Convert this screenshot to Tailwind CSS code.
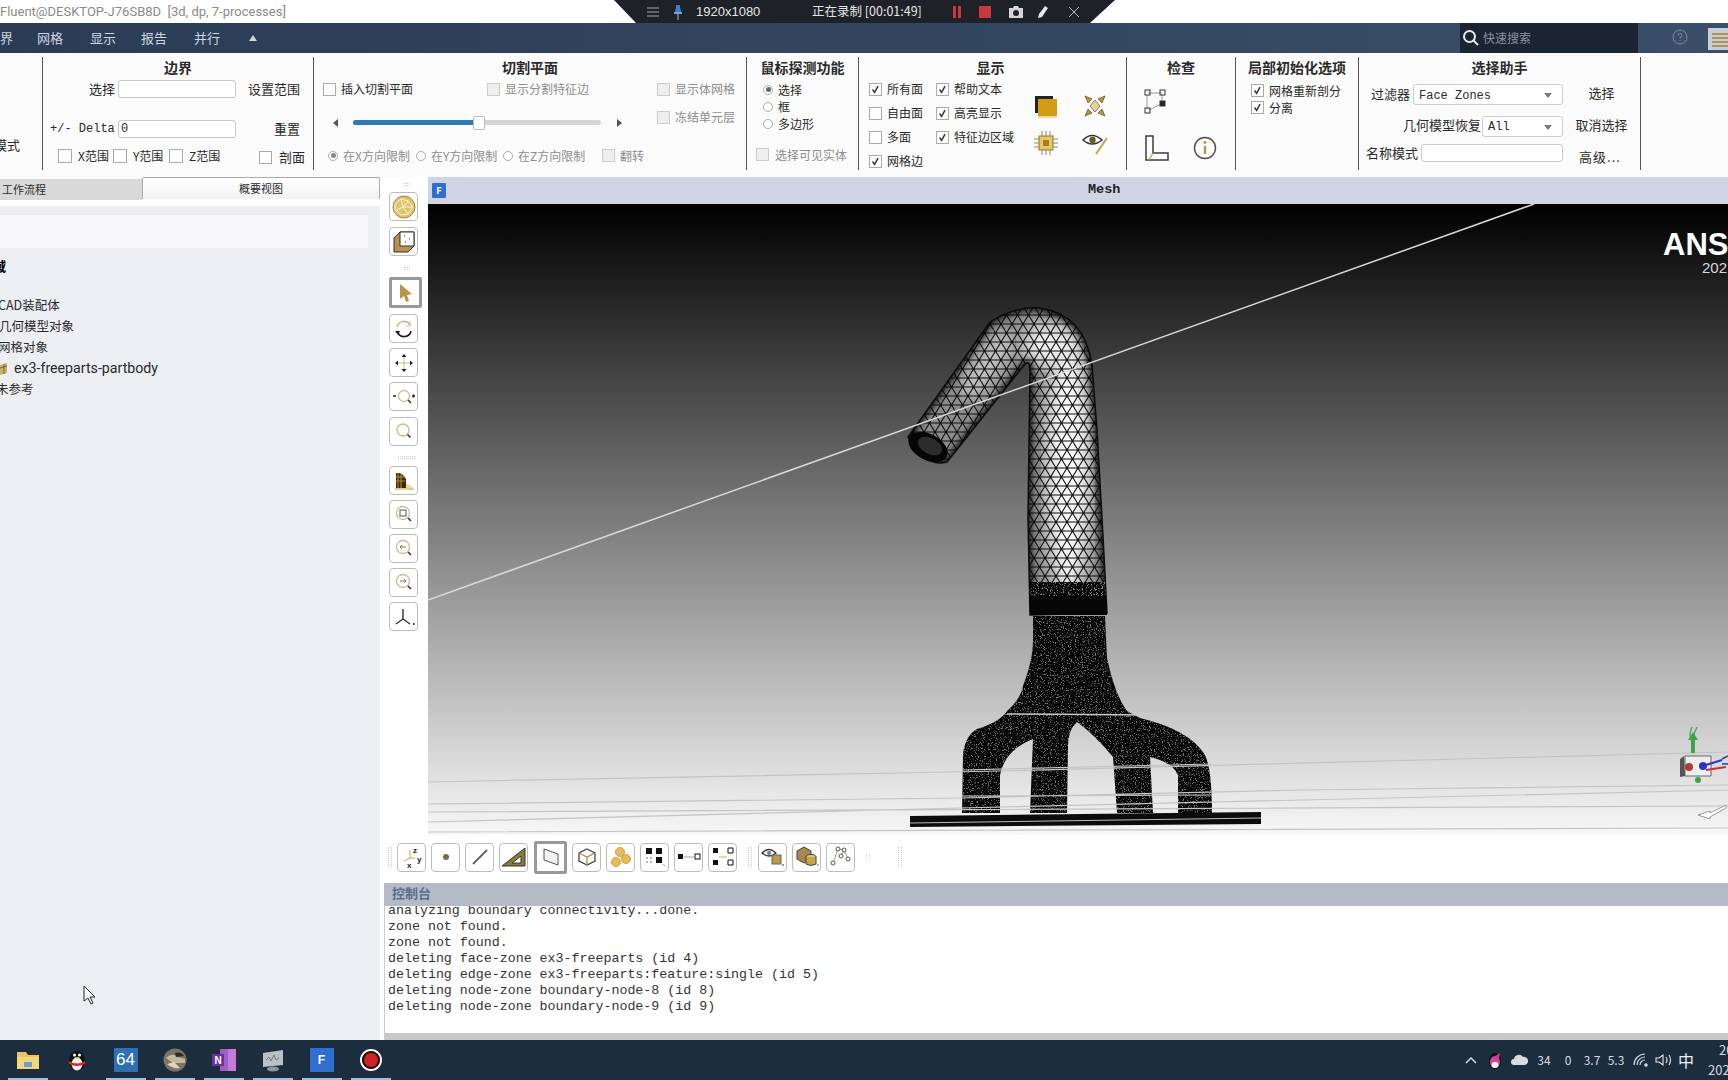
<!DOCTYPE html>
<html lang="zh-CN">
<head>
<meta charset="UTF-8" />
<title>Fluent</title>
<script src="https://cdn.jsdelivr.net/npm/@tailwindcss/browser@4"></script>
</head>
<body class="w-[1728px] h-[1080px] overflow-hidden bg-white text-[13px] text-[#2a2a2a] font-['Noto_Sans_CJK_SC','Liberation_Sans',sans-serif] relative">

<!-- shared glyphs -->
<svg class="hidden">
  <symbol id="chk" viewBox="0 0 13 13"><path d="M3 6.500l2.500 3.500L9.500 2.500" fill="none" stroke="#333" stroke-width="1.700"/></symbol>
</svg>

<!-- title bar -->
<div class="h-[23px] flex items-center bg-white text-[13px] text-[#8a8a8a] font-['Roboto',sans-serif] whitespace-pre">Fluent@DESKTOP-J76SB8D  [3d, dp, 7-processes]</div>

<!-- screen recorder overlay -->
<div class="absolute left-[614px] top-0 w-[501px] h-[23px] bg-[#1e2127] text-[#e6e6e6] text-[12.500px] [clip-path:polygon(0_0,100%_0,95%_100%,4.400%_100%)]">
  <div class="flex items-center h-full pl-[33px]">
    <svg width="12" height="12" viewBox="0 0 12 12" stroke="#aaa" fill="none"><path d="M0 2h12M0 6h12M0 10h12"/></svg>
    <svg class="ml-[14px]" width="10" height="16" viewBox="0 0 10 16"><path d="M3 1h4v2l1 5H2l1-5z" fill="#3f7fc4"/><path d="M1 8h8v2H1z" fill="#6fa6de"/><path d="M5 10v6" stroke="#bbb"/></svg>
    <span class="ml-[13px] w-[116px] font-['Liberation_Sans',sans-serif] text-[13px]">1920x1080</span>
    <span class="w-[140px] whitespace-nowrap">正在录制 [00:01:49]</span>
    <svg width="10" height="12" viewBox="0 0 10 12" fill="#c9383d"><path d="M1 0h3v12H1zM6 0h3v12H6z"/></svg>
    <span class="ml-[17px] w-[12px] h-[12px] bg-[#c9383d]"></span>
    <svg class="ml-[17px]" width="16" height="14" viewBox="0 0 16 14"><path d="M1 3h4l1-2h4l1 2h4v10H1z" fill="#d5d5d5"/><circle cx="8" cy="8" r="3" fill="#222"/></svg>
    <svg class="ml-[13px]" width="12" height="14" viewBox="0 0 12 14"><path d="M8 1l3 2-6 9-4 1 1-4z" fill="#e6e6e6"/></svg>
    <svg class="ml-[20px]" width="10" height="10" viewBox="0 0 10 10" stroke="#bbb" fill="none"><path d="M0 0l10 10M10 0L0 10"/></svg>
  </div>
</div>

<!-- menu bar -->
<nav class="h-[30px] flex items-center bg-linear-to-r from-[#2b3c55] to-[#3a4e69] text-[#cfd6e0] text-[13px]">
  <span class="w-[37px]">界</span>
  <span class="w-[53px]">网格</span>
  <span class="w-[51px]">显示</span>
  <span class="w-[53px]">报告</span>
  <span class="w-[55px]">并行</span>
  <span class="w-0 h-0 border-x-[4px] border-x-transparent border-b-[6px] border-b-[#cfd6e0]"></span>
  <div class="ml-auto w-[178px] h-full bg-[#1a2433] flex items-center pl-[2px] text-[#8b93a0] text-[12px] mr-[90px]">
    <svg width="18" height="18" viewBox="0 0 18 18" fill="none" stroke="#e6e9ee" stroke-width="2"><circle cx="7.500" cy="7.500" r="5.500"/><path d="M11.500 11.500L16 16"/></svg>
    <span class="ml-[3px]">快速搜索</span>
  </div>
  <svg class="absolute left-[1672px] top-[29px]" width="16" height="16" viewBox="0 0 16 16" fill="none" stroke="#7e8a9b"><circle cx="8" cy="8" r="7"/><path d="M6 6.500a2 2 0 1 1 2 2v1M8 11v1"/></svg>
  <svg class="absolute left-[1708px] top-[28px]" width="20" height="22" viewBox="0 0 20 22"><path d="M0 0h20v22H0z" fill="#c9ced6"/><path d="M4 6h16M4 10h16M4 14h16M4 18h16" stroke="#a5812a" stroke-width="1.500"/></svg>
</nav>

<!-- ribbon -->
<div class="h-[124px] flex pt-[4px] bg-[#fbfbfb]">

  <section class="w-[43px] h-[113px] border-r border-[#555] flex flex-col">
    <div class="mt-[78px] -ml-[6px] h-[20px] overflow-hidden whitespace-nowrap">模式</div>
  </section>

  <section class="w-[271px] h-[113px] border-r border-[#555] flex flex-col">
    <h3 class="h-[20px] leading-[20px] text-center font-bold text-[14px]">边界</h3>
    <div class="mt-[3px] h-[18px] flex items-center pl-[46px]">
      <span class="w-[29px]">选择</span>
      <span class="w-[118px] h-[18px] bg-white border border-[#c9c9c9] rounded-[3px]"></span>
      <span class="ml-[12px] whitespace-nowrap">设置范围</span>
    </div>
    <div class="mt-[22px] h-[18px] flex items-center pl-[7px]">
      <span class="w-[68px] font-['Liberation_Mono',monospace] text-[12px] whitespace-pre">+/- Delta</span>
      <span class="w-[118px] h-[18px] bg-white border border-[#c9c9c9] rounded-[3px] font-['Liberation_Mono',monospace] text-[12px] leading-[16px] pl-[2px]">0</span>
      <span class="ml-[38px]">重置</span>
    </div>
    <div class="mt-[8px] h-[19px] flex items-center pl-[15px] text-[12px]">
      <div class="w-[55px] flex items-center"><span class="w-[14px] h-[14px] border border-[#aaa] bg-white"></span><span class="ml-[6px]">X范围</span></div>
      <div class="w-[56px] flex items-center"><span class="w-[14px] h-[14px] border border-[#aaa] bg-white"></span><span class="ml-[6px]">Y范围</span></div>
      <div class="w-[90px] flex items-center"><span class="w-[14px] h-[14px] border border-[#aaa] bg-white"></span><span class="ml-[6px]">Z范围</span></div>
      <div class="flex items-center pt-[3px] text-[13px]"><span class="w-[13px] h-[13px] border border-[#aaa] bg-white"></span><span class="ml-[7px]">剖面</span></div>
    </div>
  </section>

  <section class="w-[433px] h-[113px] border-r border-[#555] flex flex-col text-[12px]">
    <h3 class="h-[20px] leading-[20px] text-center font-bold text-[14px]">切割平面</h3>
    <div class="mt-[3px] h-[18px] flex items-center pl-[9px] whitespace-nowrap">
      <div class="w-[164px] flex items-center"><span class="w-[13px] h-[13px] border border-[#aaa] bg-white"></span><span class="ml-[5px]">插入切割平面</span></div>
      <div class="w-[170px] flex items-center text-[#8d8d8d]"><span class="w-[13px] h-[13px] border border-[#ccc] bg-[#eee]"></span><span class="ml-[5px]">显示分割特征边</span></div>
      <div class="flex items-center text-[#8d8d8d]"><span class="w-[13px] h-[13px] border border-[#ccc] bg-[#eee]"></span><span class="ml-[5px]">显示体网格</span></div>
    </div>
    <div class="mt-[10px] h-[18px] flex items-start pl-[19px] whitespace-nowrap">
      <div class="w-[324px] h-[18px] flex items-center pt-[11px]">
        <span class="w-0 h-0 border-y-[4px] border-y-transparent border-r-[5px] border-r-[#555]"></span>
        <div class="ml-[15px] w-[248px] h-[5px] rounded-full bg-[#d6d6d6] flex items-center">
          <div class="w-[120px] h-[5px] rounded-l-full bg-[#2f79b5]"></div>
          <span class="w-[12px] h-[14px] bg-white border border-[#bbb] rounded-[2px]"></span>
        </div>
        <span class="ml-[16px] w-0 h-0 border-y-[4px] border-y-transparent border-l-[5px] border-l-[#555]"></span>
      </div>
      <div class="flex items-center text-[#8d8d8d]"><span class="w-[13px] h-[13px] border border-[#ccc] bg-[#eee]"></span><span class="ml-[5px]">冻结单元层</span></div>
    </div>
    <div class="mt-[20px] h-[19px] flex items-center pl-[14px] text-[#8d8d8d] whitespace-nowrap">
      <div class="w-[88px] flex items-center"><span class="w-[10px] h-[10px] rounded-full border border-[#aaa] bg-white flex items-center justify-center"><span class="w-[5px] h-[5px] rounded-full bg-[#888]"></span></span><span class="ml-[5px]">在X方向限制</span></div>
      <div class="w-[87px] flex items-center"><span class="w-[10px] h-[10px] rounded-full border border-[#aaa] bg-white"></span><span class="ml-[5px]">在Y方向限制</span></div>
      <div class="w-[99px] flex items-center"><span class="w-[10px] h-[10px] rounded-full border border-[#aaa] bg-white"></span><span class="ml-[5px]">在Z方向限制</span></div>
      <div class="flex items-center"><span class="w-[13px] h-[13px] border border-[#ccc] bg-[#eee]"></span><span class="ml-[5px]">翻转</span></div>
    </div>
  </section>

  <section class="w-[112px] h-[113px] border-r border-[#555] flex flex-col whitespace-nowrap text-[12px]">
    <h3 class="h-[20px] leading-[20px] text-center font-bold text-[14px]">鼠标探测功能</h3>
    <div class="mt-[4px] h-[17px] flex items-center pl-[16px]"><span class="w-[10px] h-[10px] rounded-full border border-[#aaa] bg-white flex items-center justify-center"><span class="w-[5px] h-[5px] rounded-full bg-[#666]"></span></span><span class="ml-[5px]">选择</span></div>
    <div class="h-[17px] flex items-center pl-[16px]"><span class="w-[10px] h-[10px] rounded-full border border-[#aaa] bg-white"></span><span class="ml-[5px]">框</span></div>
    <div class="h-[17px] flex items-center pl-[16px]"><span class="w-[10px] h-[10px] rounded-full border border-[#aaa] bg-white"></span><span class="ml-[5px]">多边形</span></div>
    <div class="mt-[14px] h-[17px] flex items-center pl-[9px] text-[#8d8d8d]"><span class="w-[13px] h-[13px] border border-[#ccc] bg-[#eee]"></span><span class="ml-[6px]">选择可见实体</span></div>
  </section>

  <section class="w-[268px] h-[113px] border-r border-[#555] flex flex-col whitespace-nowrap text-[12px]">
    <h3 class="h-[20px] leading-[20px] text-center font-bold text-[14px] pr-[4px]">显示</h3>
    <div class="flex">
      <div class="w-[77px] pl-[10px]">
        <div class="h-[24px] flex items-center"><span class="w-[13px] h-[13px] border border-[#aaa] bg-white"><svg class="w-full h-full"><use href="#chk"/></svg></span><span class="ml-[5px]">所有面</span></div>
        <div class="h-[24px] flex items-center"><span class="w-[13px] h-[13px] border border-[#aaa] bg-white"></span><span class="ml-[5px]">自由面</span></div>
        <div class="h-[24px] flex items-center"><span class="w-[13px] h-[13px] border border-[#aaa] bg-white"></span><span class="ml-[5px]">多面</span></div>
        <div class="h-[24px] flex items-center"><span class="w-[13px] h-[13px] border border-[#aaa] bg-white"><svg class="w-full h-full"><use href="#chk"/></svg></span><span class="ml-[5px]">网格边</span></div>
      </div>
      <div class="w-[95px]">
        <div class="h-[24px] flex items-center"><span class="w-[13px] h-[13px] border border-[#aaa] bg-white"><svg class="w-full h-full"><use href="#chk"/></svg></span><span class="ml-[5px]">帮助文本</span></div>
        <div class="h-[24px] flex items-center"><span class="w-[13px] h-[13px] border border-[#aaa] bg-white"><svg class="w-full h-full"><use href="#chk"/></svg></span><span class="ml-[5px]">高亮显示</span></div>
        <div class="h-[24px] flex items-center"><span class="w-[13px] h-[13px] border border-[#aaa] bg-white"><svg class="w-full h-full"><use href="#chk"/></svg></span><span class="ml-[5px]">特征边区域</span></div>
      </div>
      <div class="grid grid-cols-[30px_30px] gap-x-[19px] gap-y-[7px] pt-[14px] h-fit">
        <svg width="30" height="30" viewBox="0 0 30 30"><path d="M4 5h18v3H7v14H4z" fill="#222"/><rect x="7" y="8" width="19" height="17" fill="#d29c14"/><path d="M7 26h19" stroke="#f0dc9c" stroke-width="2"/></svg>
        <svg width="30" height="30" viewBox="0 0 30 30" fill="#b8953f" stroke="#4a3a15" stroke-width=".6"><path d="M5 5l7 3-4 4zM25 5l-7 3 4 4zM5 25l7-3-4-4zM25 25l-7-3 4-4z"/><path d="M15 9l5 6-5 6-5-6z" fill="#e6d49c"/></svg>
        <svg width="30" height="30" viewBox="0 0 30 30"><rect x="8" y="8" width="14" height="14" fill="#e9c766" stroke="#8a7334"/><rect x="12" y="12" width="6" height="6" fill="#a67f1c"/><path d="M11 3v5M15 3v5M19 3v5M11 22v5M15 22v5M19 22v5M3 11h5M3 15h5M3 19h5M22 11h5M22 15h5M22 19h5" stroke="#9a8a4a"/></svg>
        <svg width="30" height="30" viewBox="0 0 30 30"><path d="M3 12q9-9 19 0-10 8-19 0z" fill="#fff" stroke="#333" stroke-width="1.600"/><circle cx="12.500" cy="12" r="3.200" fill="#6b5a2a"/><path d="M27 10L16 26" stroke="#c9a34a" stroke-width="2"/></svg>
      </div>
    </div>
  </section>

  <section class="w-[109px] h-[113px] border-r border-[#555] flex flex-col">
    <h3 class="h-[20px] leading-[20px] text-center font-bold text-[14px]">检查</h3>
    <div class="pl-[13px] mt-[9px]">
      <svg width="30" height="30" viewBox="0 0 30 30" fill="none" stroke="#333"><path d="M8 7h14M7 9v14M9 24l12-6M22 9v7" stroke="#999"/><rect x="5" y="4" width="5" height="5"/><rect x="20" y="4" width="5" height="5"/><rect x="5" y="22" width="5" height="5"/><rect x="20" y="15" width="5" height="5" fill="#222"/></svg>
    </div>
    <div class="pl-[13px] mt-[17px] flex gap-[20px]">
      <svg width="30" height="30" viewBox="0 0 30 30" fill="#fff" stroke="#3d3d3d" stroke-width="1.500"><path d="M6 3h7v17h15v7H6z"/><path d="M13 20l-4 7" stroke="#c9a34a"/></svg>
      <svg width="30" height="30" viewBox="0 0 30 30" fill="none" stroke="#4d4d4d" stroke-width="1.400"><circle cx="15" cy="15" r="10.500"/><path d="M15 13v8" stroke="#b8953f" stroke-width="2.400"/><circle cx="15" cy="9.500" r="1.400" fill="#b8953f" stroke="none"/></svg>
    </div>
  </section>

  <section class="w-[123px] h-[113px] border-r border-[#555] flex flex-col whitespace-nowrap text-[12px]">
    <h3 class="h-[20px] leading-[20px] text-center font-bold text-[14px]">局部初始化选项</h3>
    <div class="mt-[5px] h-[17px] flex items-center pl-[15px]"><span class="w-[13px] h-[13px] border border-[#aaa] bg-white"><svg class="w-full h-full"><use href="#chk"/></svg></span><span class="ml-[5px]">网格重新剖分</span></div>
    <div class="h-[17px] flex items-center pl-[15px]"><span class="w-[13px] h-[13px] border border-[#aaa] bg-white"><svg class="w-full h-full"><use href="#chk"/></svg></span><span class="ml-[5px]">分离</span></div>
  </section>

  <section class="w-[282px] h-[113px] border-r border-[#555] flex flex-col whitespace-nowrap">
    <h3 class="h-[20px] leading-[20px] text-center font-bold text-[14px]">选择助手</h3>
    <div class="mt-[7px] h-[21px] flex items-center justify-end">
      <span class="mr-[3px] pb-[1px]">过滤器</span>
      <div class="w-[150px] h-[21px] bg-white border border-[#ccc] rounded-[3px] flex items-center justify-between px-[5px] pt-[2px] font-['Liberation_Mono',monospace] text-[12px]">Face Zones<span class="mr-[5px] w-0 h-0 border-x-[4px] border-x-transparent border-t-[5px] border-t-[#777]"></span></div>
      <span class="w-[77px] text-center pb-[3px]">选择</span>
    </div>
    <div class="mt-[11px] h-[21px] flex items-center justify-end">
      <span class="mr-[1px] pb-[3px]">几何模型恢复</span>
      <div class="w-[81px] h-[21px] bg-white border border-[#ccc] rounded-[3px] flex items-center justify-between px-[5px] pt-[1px] font-['Liberation_Mono',monospace] text-[12px]">All<span class="mr-[5px] w-0 h-0 border-x-[4px] border-x-transparent border-t-[5px] border-t-[#777]"></span></div>
      <span class="w-[77px] text-center pb-[3px]">取消选择</span>
    </div>
    <div class="mt-[7px] h-[18px] flex items-center justify-end">
      <span class="mr-[3px]">名称模式</span>
      <div class="w-[142px] h-[18px] bg-white border border-[#ccc] rounded-[3px]"></div>
      <span class="w-[77px] text-center pt-[8px] tracking-[1px] pr-[3px]">高级...</span>
    </div>
  </section>
</div>

<!-- main work area -->
<div class="flex h-[863px]">

  <!-- outline panel -->
  <aside class="w-[380px] flex flex-col overflow-hidden">
    <div class="h-[23px] flex shrink-0 text-[11px]">
      <div class="w-[142px] mt-[2px] h-[21px] bg-[#d9d9d9] pl-[2px] leading-[20px]">工作流程</div>
      <div class="w-[238px] h-[22px] bg-linear-to-b from-white to-[#f2f2f2] border border-b-0 border-[#aaa] rounded-t-[2px] text-center leading-[20px]">概要视图</div>
    </div>
    <div class="mt-[6px] flex-1 bg-[#edeef2] pt-[9px] text-[12.500px]">
      <div class="w-[368px] h-[33px] bg-[#f9f9fb]"></div>
      <div class="mt-[7px] h-[22px] -ml-[7px] font-bold text-[13px] leading-[22px] text-black">域</div>
      <div class="mt-[17px] h-[21px] -ml-[2px] leading-[21px]">CAD装配体</div>
      <div class="h-[21px] -ml-[1px] leading-[21px]">几何模型对象</div>
      <div class="h-[21px] -ml-[2px] leading-[21px]">网格对象</div>
      <div class="h-[21px] flex items-center pt-[2px]">
        <svg width="8" height="14" viewBox="0 0 8 14"><path d="M0 3l7-2v10l-7 2z" fill="#c9b26a"/><path d="M4 2v10M0 6l7-2" stroke="#6d6a3c" fill="none"/></svg>
        <span class="ml-[6px] font-['Roboto',sans-serif] text-[14.200px]">ex3-freeparts-partbody</span>
      </div>
      <div class="h-[21px] -ml-[4px] leading-[21px]">未参考</div>
    </div>
  </aside>

  <div class="flex-1 flex flex-col min-w-0">
    <div class="h-[658px] flex shrink-0">

      <!-- vertical toolbar -->
      <div class="w-[48px] pl-[9px] pt-[6px] shrink-0 bg-white">
        <div class="ml-[15px] w-[6px] h-[3px] mb-[6px] border-y border-dotted border-[#ccc]"></div>
        <div class="w-[29px] h-[29px] mb-[6px] rounded-[4px] border border-[#bbb] flex items-center justify-center">
          <svg width="24" height="24" viewBox="0 0 24 24"><circle cx="12" cy="12" r="11" fill="#e0c473" stroke="#a68a3c"/><path d="M3 9l6-5 7 2 5 6-5 7-7 1-6-5zM9 4l2 8 5-6M11 12l-8 4M11 12l5 7M11 12l10 0" fill="none" stroke="#fff4cc"/></svg>
        </div>
        <div class="w-[29px] h-[29px] mb-[11px] rounded-[4px] border border-[#bbb] flex items-center justify-center">
          <svg width="22" height="22" viewBox="0 0 22 22"><path d="M1 7l6-6h14v14l-6 6H1z" fill="#b8924a" stroke="#333"/><path d="M7 1h14v14H7z" fill="#fff" stroke="#333"/><path d="M11 5h1M16 8h1M12 11h1" stroke="#222"/></svg>
        </div>
        <div class="ml-[15px] w-[6px] h-[3px] mb-[7px] border-y border-dotted border-[#ccc]"></div>
        <div class="w-[33px] h-[31px] mb-[6px] rounded-[2px] border-[3px] border-[#999] flex items-center justify-center">
          <svg width="16" height="20" viewBox="0 0 16 20"><path d="M2 1l12 10-5 1 2 6-3 1-2-6-4 3z" fill="#b9954a"/></svg>
        </div>
        <div class="w-[29px] h-[29px] mb-[5px] rounded-[4px] border border-[#bbb] flex items-center justify-center">
          <svg width="20" height="20" viewBox="0 0 20 20" fill="none" stroke-width="1.600"><path d="M3 8a7 7 0 0 1 13-2" stroke="#c9bc8c"/><path d="M17 12a7 7 0 0 1-13 2" stroke="#222"/><path d="M16 2v5h-4" stroke="#c9bc8c" stroke-width="1"/><path d="M1 12h5l-2 4z" fill="#222" stroke="none"/></svg>
        </div>
        <div class="w-[29px] h-[29px] mb-[5px] rounded-[4px] border border-[#bbb] flex items-center justify-center">
          <svg width="20" height="20" viewBox="0 0 20 20"><path d="M10 3v14M3 10h14" stroke="#c9bc8c"/><path d="M10 1l2.500 3h-5zM10 19l2.500-3h-5zM1 10l3-2.500v5zM19 10l-3-2.500v5z" fill="#222"/></svg>
        </div>
        <div class="w-[29px] h-[29px] mb-[6px] rounded-[4px] border border-[#bbb] flex items-center justify-center">
          <svg width="24" height="20" viewBox="0 0 24 20" fill="none"><circle cx="12" cy="9" r="5.500" stroke="#c9bc8c" stroke-width="1.300"/><path d="M16 13l3 3" stroke="#333" stroke-width="1.600"/><path d="M1 9h3M20 9h3M21.500 7.500v3" stroke="#222" stroke-width="1.500"/></svg>
        </div>
        <div class="w-[29px] h-[29px] mb-[10px] rounded-[4px] border border-[#bbb] flex items-center justify-center">
          <svg width="20" height="20" viewBox="0 0 20 20" fill="none"><circle cx="9" cy="8" r="6" stroke="#c9bc8c" stroke-width="1.300"/><path d="M13.500 12.500l3 3" stroke="#333" stroke-width="1.600"/></svg>
        </div>
        <div class="ml-[9px] w-[17px] h-[3px] mb-[7px] border-y border-dotted border-[#ccc]"></div>
        <div class="w-[29px] h-[29px] mb-[5px] rounded-[4px] border border-[#bbb] flex items-center justify-center">
          <svg width="22" height="22" viewBox="0 0 22 22"><path d="M3 3h4l3 2 3 4v9H3z" fill="#3d2a0c"/><path d="M5 3v15M8 4v14M3 7h9M3 11h9" stroke="#b88f3c"/><path d="M13 13l8 5H13z" fill="#ead9a0"/><path d="M2 19h19" stroke="#d9bc66" stroke-width="1.500"/></svg>
        </div>
        <div class="w-[29px] h-[29px] mb-[5px] rounded-[4px] border border-[#bbb] flex items-center justify-center">
          <svg width="20" height="20" viewBox="0 0 20 20" fill="none"><circle cx="9" cy="8" r="6.500" stroke="#c9bc8c" stroke-width="1.300"/><rect x="6" y="5" width="6" height="6" stroke="#555"/><path d="M14 13l3 3" stroke="#333" stroke-width="1.600"/></svg>
        </div>
        <div class="w-[29px] h-[29px] mb-[5px] rounded-[4px] border border-[#bbb] flex items-center justify-center">
          <svg width="20" height="20" viewBox="0 0 20 20" fill="none"><circle cx="9" cy="8" r="6.500" stroke="#c9bc8c" stroke-width="1.300"/><path d="M12 8H6M8 6L6 8l2 2" stroke="#777"/><path d="M14 13l3 3" stroke="#333" stroke-width="1.600"/></svg>
        </div>
        <div class="w-[29px] h-[29px] mb-[5px] rounded-[4px] border border-[#bbb] flex items-center justify-center">
          <svg width="20" height="20" viewBox="0 0 20 20" fill="none"><circle cx="9" cy="8" r="6.500" stroke="#c9bc8c" stroke-width="1.300"/><path d="M6 8h6M10 6l2 2-2 2" stroke="#777"/><path d="M14 13l3 3" stroke="#333" stroke-width="1.600"/></svg>
        </div>
        <div class="w-[29px] h-[29px] rounded-[4px] border border-[#bbb] flex items-center justify-center">
          <svg width="22" height="20" viewBox="0 0 22 20" fill="none" stroke="#333" stroke-width="1.400"><path d="M10 2v10L3 17M10 12l7 5"/><path d="M20 17h1.500" stroke-width="2"/></svg>
        </div>
      </div>

      <!-- graphics window -->
      <div class="flex-1 flex flex-col min-w-0">
        <div class="h-[27px] shrink-0 flex items-center bg-[#d0d5e6] relative">
          <span class="ml-[4px] w-[14px] h-[15px] bg-[#2f6fd0] rounded-[1px] text-white text-[9px] font-bold leading-[15px] text-center">F</span>
          <span class="absolute left-[660px] font-['Liberation_Mono',monospace] font-bold text-[13.500px] text-[#222]">Mesh</span>
        </div>
        <div class="relative flex-1 overflow-hidden bg-linear-to-b/srgb from-[#000] to-[#f7f7f7]">
          <svg class="absolute inset-0" width="1300" height="631" viewBox="428 204 1300 631">
            <defs>
              <pattern id="tri" width="11" height="18" patternUnits="userSpaceOnUse">
                <path d="M0 0h11M0 9h11M0 18h11M0 0l5.500 9L11 0M0 18l5.500-9L11 18" fill="none" stroke="#0c0c0c" stroke-width="1.100"/>
              </pattern>
              <filter id="speck" x="0" y="0" width="100%" height="100%">
                <feTurbulence type="fractalNoise" baseFrequency="0.85" numOctaves="2" seed="4"/>
                <feColorMatrix values="0 0 0 0 1  0 0 0 0 1  0 0 0 0 1  7 0 0 0 -3.900"/>
              </filter>
              <filter id="soft"><feGaussianBlur stdDeviation="9"/></filter>
              <filter id="edge"><feGaussianBlur stdDeviation="3"/></filter>
              <clipPath id="tubeClip"><path d="M908 437L990 322Q1015 306 1040 308Q1085 315 1092 365L1097 430L1103 536L1107 613L1030 615L1028 518L1030 371Q1030 360 1025 364L947 462Q925 468 908 437Z"/></clipPath>
              <clipPath id="legClip"><path d="M1033 616L1105 616L1107 658Q1115 695 1127 711L1140 718Q1190 730 1205 755Q1212 770 1212 813L1178 813L1178 775Q1172 762 1150 757L1153 813L1117 813L1113 757Q1095 735 1077 722Q1068 730 1068 746L1067 813L1030 813L1033 739Q1005 750 1000 775L1000 813L962 813L963 753Q966 735 977 729Q1000 722 1007 711Q1020 700 1023 686Q1033 660 1033 641Z"/></clipPath>
              <clipPath id="collarClip"><path d="M1030 582L1105 582L1107 615L1030 615Z"/></clipPath>
            </defs>

            <!-- legs and trunk -->
            <g clip-path="url(#legClip)">
              <rect x="950" y="610" width="270" height="210" fill="#060606"/>
              <rect x="950" y="610" width="270" height="210" filter="url(#speck)" opacity=".45"/>
            </g>

            <!-- upper tube -->
            <g clip-path="url(#tubeClip)">
              <rect x="900" y="300" width="220" height="320" fill="#8c8c8c"/>
              <ellipse cx="1068" cy="470" rx="22" ry="130" fill="#fafafa" filter="url(#soft)"/>
              <ellipse cx="1050" cy="345" rx="28" ry="22" fill="#f0f0f0" filter="url(#soft)"/>
              <path d="M965 395L1010 335" stroke="#cfcfcf" stroke-width="20" filter="url(#soft)"/>
              <rect x="900" y="300" width="220" height="320" fill="url(#tri)"/>
              <path d="M908 437L990 322Q1015 306 1040 308Q1085 315 1092 365L1097 430L1103 536L1107 613L1030 615L1028 518L1030 371Q1030 360 1025 364L947 462Q925 468 908 437Z" fill="none" stroke="#000" stroke-width="6" filter="url(#edge)"/>
            </g>
            <path d="M908 437L990 322Q1015 306 1040 308Q1085 315 1092 365L1097 430L1103 536L1107 613L1030 615L1028 518L1030 371Q1030 360 1025 364L947 462Q925 468 908 437Z" fill="none" stroke="#0c0c0c" stroke-width="1.500"/>
            <g clip-path="url(#collarClip)">
              <rect x="1025" y="582" width="85" height="35" fill="#060606"/>
              <rect x="1025" y="582" width="85" height="14" filter="url(#speck)" opacity=".55"/>
            </g>
            <ellipse cx="928" cy="447" rx="21" ry="13" transform="rotate(28 928 447)" fill="#060606"/>
            <ellipse cx="930" cy="446" rx="13" ry="8" transform="rotate(28 930 446)" fill="#2c2c2c"/>

            <!-- feature lines -->
            <path d="M428 600L1534 204" stroke="#d9d9d9" stroke-width="1.500"/>
            <path d="M1007 714L1160 715" stroke="#c9c9c9" stroke-width="1.500"/>
            <path d="M428 782L1000 771L1728 752M428 804L962 798L1300 790L1728 785M428 822L960 808L1728 790M962 770L1212 764M428 832L1728 828M428 812L1728 806M962 796L1212 795" stroke="#c4c4c4" stroke-width="1.200" fill="none"/>

            <!-- base plate -->
            <path d="M910 816L1261 812V824L910 827Z" fill="#0c0c0c"/>
            <path d="M910 823L1261 818" stroke="#bbb"/>

            <!-- triad -->
            <path d="M1692 727q-4 9 0 14M1697 727l-4 9" stroke="#4fae5a" stroke-width="1.500" fill="none"/>
            <path d="M1698 740l-5-8-5 8h3v13h4v-13z" fill="#3da34b"/>
            <path d="M1685 756h26v20h-26z" fill="#eee" stroke="#666"/>
            <path d="M1684 756l-4 3v18l5-1z" fill="#555"/>
            <circle cx="1689" cy="767" r="4" fill="#b33a3a"/>
            <circle cx="1703" cy="766" r="4" fill="#2a35c4"/>
            <path d="M1706 765l16-5" stroke="#2a35c4" stroke-width="2"/>
            <path d="M1706 770l20-3" stroke="#c6303a" stroke-width="2"/>
            <path d="M1722 759l6-3M1722 764l6 0" stroke="#2a35c4" stroke-width="1.500"/>
            <circle cx="1698" cy="780" r="3" fill="#3da34b"/>
            <path d="M1698 815l12-4v2l16-8v3l-16 9v2z" fill="#fff" stroke="#999"/>
          </svg>
          <div class="absolute left-[1235px] top-[25px] text-white leading-none whitespace-nowrap font-['Liberation_Sans',sans-serif]">
            <div class="text-[31px] font-bold">ANS</div>
            <div class="text-[15px] text-[#d9d9d9] pl-[39px]">202</div>
          </div>
        </div>
      </div>
    </div>

    <!-- bottom toolbar -->
    <div class="h-[48px] shrink-0 flex items-center pl-[8px] pb-[4px] bg-white">
      <div class="w-[4px] h-[20px] mr-[5px] border-x border-dotted border-[#ccc]"></div>
      <div class="w-[29px] h-[29px] rounded-[4px] border border-[#bbb] flex items-center justify-center mr-[5px]">
        <svg width="25" height="25" viewBox="0 0 25 25"><path d="M11 5v8M11 13l-6 3M11 13h5" stroke="#c9a34a" fill="none"/><text x="14" y="8" font-size="8" font-weight="bold" font-family="Liberation Sans" fill="#222">z</text><text x="18" y="17" font-size="8" font-weight="bold" font-family="Liberation Sans" fill="#222">y</text><text x="8" y="23" font-size="8" font-weight="bold" font-family="Liberation Sans" fill="#222">x</text></svg>
      </div>
      <div class="w-[29px] h-[29px] rounded-[4px] border border-[#bbb] flex items-center justify-center mr-[5px]">
        <svg width="10" height="10" viewBox="0 0 10 10"><circle cx="5" cy="5" r="3" fill="#7c6f3d"/></svg>
      </div>
      <div class="w-[29px] h-[29px] rounded-[4px] border border-[#bbb] flex items-center justify-center mr-[5px]">
        <svg width="20" height="20" viewBox="0 0 20 20"><path d="M3 17L17 3" stroke="#666" stroke-width="2"/></svg>
      </div>
      <div class="w-[29px] h-[29px] rounded-[4px] border border-[#bbb] flex items-center justify-center mr-[6px]">
        <svg width="26" height="22" viewBox="0 0 26 22"><path d="M1 20L24 2v18z" fill="#8a7a3c" stroke="#333"/><path d="M11 17l9-7v7z" fill="#fff" stroke="#333"/></svg>
      </div>
      <div class="w-[33px] h-[33px] rounded-[2px] border-[3px] border-[#999] flex items-center justify-center mr-[5px]">
        <svg width="18" height="20" viewBox="0 0 18 20" fill="#f3f3f3" stroke="#555"><path d="M2 2l14 5v11L2 13z"/></svg>
      </div>
      <div class="w-[29px] h-[29px] rounded-[4px] border border-[#bbb] flex items-center justify-center mr-[5px]">
        <svg width="20" height="20" viewBox="0 0 20 20" fill="#fff" stroke="#444" stroke-width="1.300"><path d="M10 2l8 4v8l-8 4-8-4V6z"/><path d="M2 6l8 4 8-4M10 10v8" fill="none" stroke="#a58f4c"/></svg>
      </div>
      <div class="w-[29px] h-[29px] rounded-[4px] border border-[#bbb] flex items-center justify-center mr-[5px]">
        <svg width="22" height="22" viewBox="0 0 22 22" fill="#e6bc58" stroke="#d1a643"><circle cx="10" cy="6" r="4.500"/><circle cx="6" cy="16" r="4.500"/><circle cx="16" cy="13" r="4.500"/></svg>
      </div>
      <div class="w-[29px] h-[29px] rounded-[4px] border border-[#bbb] flex items-center justify-center mr-[5px]">
        <svg width="22" height="22" viewBox="0 0 22 22"><path d="M2 2h6v6H2zM12 2h6v6h-6zM12 11h6v6h-6z" fill="#111"/><path d="M2 12h2M6 12h2M2 16h2M6 16h2" stroke="#777"/><path d="M19 18l2 2" stroke="#a8a076"/></svg>
      </div>
      <div class="w-[29px] h-[29px] rounded-[4px] border border-[#bbb] flex items-center justify-center mr-[5px]">
        <svg width="24" height="12" viewBox="0 0 24 12"><rect x="1" y="3" width="5" height="5" fill="#111"/><path d="M7 6h10" stroke="#a8a076"/><rect x="18" y="3" width="5" height="5" fill="#fff" stroke="#111"/></svg>
      </div>
      <div class="w-[29px] h-[29px] rounded-[4px] border border-[#bbb] flex items-center justify-center mr-[11px]">
        <svg width="24" height="22" viewBox="0 0 24 22"><path d="M2 2h5v5H2zM2 14h5v5H2z" fill="#111"/><path d="M8 11h8" stroke="#c9b26a"/><path d="M17 2h5v5h-5zM17 14h5v5h-5z" fill="#fff" stroke="#111"/></svg>
      </div>
      <div class="w-[4px] h-[20px] mr-[6px] border-x border-dotted border-[#ccc]"></div>
      <div class="w-[29px] h-[29px] rounded-[4px] border border-[#bbb] flex items-center justify-center mr-[5px]">
        <svg width="24" height="22" viewBox="0 0 24 22"><path d="M1 7q7-7 14 0-7 6-14 0z" fill="#fff" stroke="#333" stroke-width="1.300"/><circle cx="8" cy="7" r="2" fill="#777"/><rect x="11" y="9" width="9" height="9" fill="#b89a4a" stroke="#666"/><path d="M21 19h2" stroke="#333"/></svg>
      </div>
      <div class="w-[29px] h-[29px] rounded-[4px] border border-[#bbb] flex items-center justify-center mr-[5px]">
        <svg width="24" height="24" viewBox="0 0 24 24"><path d="M2 6l7-4 7 4v8l-7 4-7-4z" fill="#a58a4c" stroke="#444"/><ellipse cx="16" cy="12" rx="5" ry="2.500" fill="#e6c675" stroke="#444"/><path d="M11 12v7q5 3 10 0v-7" fill="#c9a34a" stroke="#444"/><path d="M22 20h1.500" stroke="#333"/></svg>
      </div>
      <div class="w-[29px] h-[29px] rounded-[4px] border border-[#bbb] flex items-center justify-center">
        <svg width="24" height="24" viewBox="0 0 24 24" fill="#fff" stroke="#555"><path d="M9 4l6 1 4 9M9 4L4 18M15 5l-3 6" fill="none" stroke="#a8a076"/><circle cx="9" cy="4" r="2"/><circle cx="15" cy="5" r="2"/><circle cx="12" cy="11" r="2"/><circle cx="19" cy="14" r="2"/><circle cx="4" cy="18" r="2"/></svg>
      </div>
      <div class="ml-[11px] w-[4px] h-[6px] border-x border-dotted border-[#ddd]"></div>
      <div class="ml-[28px] w-[4px] h-[20px] border-x border-dotted border-[#ccc]"></div>
    </div>

    <!-- console -->
    <div class="h-[23px] shrink-0 ml-[4px] bg-[#b6bac6] text-[#5d6e89] font-bold text-[13px] leading-[20px] pl-[8px]">控制台</div>
    <div class="h-[127px] shrink-0 ml-[4px] flex flex-col overflow-hidden bg-white border-l border-[#ccc] font-['Liberation_Mono',monospace] text-[13.300px] leading-[16px] text-[#333] pl-[3px]">
      <div class="shrink-0 h-[16px] -mt-[3px] whitespace-pre">analyzing boundary connectivity...done.</div>
      <div class="shrink-0 h-[16px] whitespace-pre">zone not found.</div>
      <div class="shrink-0 h-[16px] whitespace-pre">zone not found.</div>
      <div class="shrink-0 h-[16px] whitespace-pre">deleting face-zone ex3-freeparts (id 4)</div>
      <div class="shrink-0 h-[16px] whitespace-pre">deleting edge-zone ex3-freeparts:feature:single (id 5)</div>
      <div class="shrink-0 h-[16px] whitespace-pre">deleting node-zone boundary-node-8 (id 8)</div>
      <div class="shrink-0 h-[16px] whitespace-pre">deleting node-zone boundary-node-9 (id 9)</div>
    </div>
    <div class="h-[7px] shrink-0 ml-[4px] bg-[#c9c9cc]"></div>
  </div>
</div>

<!-- taskbar -->
<footer class="absolute left-0 bottom-0 w-[1728px] h-[40px] bg-[#1c2d3d] flex items-center pl-[3px] text-[#d5dae0] text-[12px] overflow-hidden">
  <div class="w-[49px] h-full flex items-center justify-center">
    <svg width="24" height="20" viewBox="0 0 24 20"><path d="M1 2h9l2 3h11v14H1z" fill="#e8c65f"/><path d="M1 7h22v12H1z" fill="#f2d77e"/><rect x="8" y="12" width="8" height="5" fill="#6fa0c8"/></svg>
  </div>
  <div class="w-[49px] h-full flex items-center justify-center">
    <svg width="22" height="24" viewBox="0 0 22 24"><ellipse cx="11" cy="13" rx="8" ry="10" fill="#111"/><ellipse cx="11" cy="16" rx="5.500" ry="6.500" fill="#f3f3f3"/><path d="M3 13q8 5 16 0v3q-8 4-16 0z" fill="#d8262c"/><circle cx="8.500" cy="7" r="1.500" fill="#fff"/><circle cx="13.500" cy="7" r="1.500" fill="#fff"/><path d="M8 9h6l-3 2z" fill="#e8b020"/></svg>
  </div>
  <div class="w-[49px] h-full flex items-center justify-center">
    <span class="w-[24px] h-[24px] bg-[#2f6fb5] text-white text-[17px] leading-[24px] text-center font-['Liberation_Sans',sans-serif]">64</span>
  </div>
  <div class="w-[49px] h-full flex items-center justify-center">
    <svg width="24" height="24" viewBox="0 0 24 24"><circle cx="12" cy="12" r="11.500" fill="#7d7468"/><path d="M3 10q6-6 12-1l7 2v4H10z" fill="#c9b79c"/><path d="M12 5q6-2 9 3l-8 1z" fill="#2e2a28"/><path d="M4 16q5 5 13 4l-6-6z" fill="#e1d3bd"/></svg>
  </div>
  <div class="w-[49px] h-full flex items-center justify-center">
    <svg width="24" height="24" viewBox="0 0 24 24"><path d="M8 1h16v22H8z" fill="#a05fc7"/><path d="M16 1h8v22h-8z" fill="#c37bd9"/><rect x="0" y="6" width="12" height="12" fill="#6b2fa0"/><text x="2.500" y="15.500" font-size="10" font-weight="bold" fill="#fff" font-family="Liberation Sans">N</text></svg>
  </div>
  <div class="w-[49px] h-full flex items-center justify-center">
    <svg width="24" height="24" viewBox="0 0 24 24"><path d="M2 5l20-3v15l-20 2z" fill="#b9c1c5"/><path d="M5 12l3-3 2 4 3-6 2 5 3-2" fill="none" stroke="#6f7a80"/><ellipse cx="12" cy="21" rx="6" ry="2.500" fill="#8d979c"/></svg>
  </div>
  <div class="w-[49px] h-full flex items-center justify-center">
    <span class="w-[24px] h-[24px] bg-[#2f6fd0] text-white text-[12px] font-bold leading-[24px] text-center font-['Liberation_Sans',sans-serif]">F</span>
  </div>
  <div class="w-[49px] h-full flex items-center justify-center">
    <span class="w-[22px] h-[22px] rounded-full bg-[#d42127] border-2 border-white outline-2 outline-[#111] -outline-offset-[4px]"></span>
  </div>

  <!-- system tray -->
  <div class="ml-auto h-full flex items-center whitespace-nowrap">
    <svg class="mr-[10px]" width="12" height="8" viewBox="0 0 12 8" fill="none" stroke="#e6e9ee" stroke-width="1.300"><path d="M1 7l5-5 5 5"/></svg>
    <svg class="mr-[8px]" width="16" height="20" viewBox="0 0 16 20"><ellipse cx="8" cy="11" rx="6" ry="8" fill="#111"/><ellipse cx="8" cy="12" rx="5" ry="6" fill="#d04a9a"/><path d="M5 8l8-5-1 6z" fill="#c93a8c"/><ellipse cx="8" cy="15" rx="3.500" ry="3" fill="#f3f3f3"/></svg>
    <svg class="mr-[4px]" width="17" height="12" viewBox="0 0 17 12"><path d="M3 11a3 3 0 0 1 0-6 5 5 0 0 1 9-2 4 4 0 0 1 2 8z" fill="#d5dce2"/></svg>
    <span class="w-[24px] text-center">34</span>
    <span class="w-[24px] text-center">0</span>
    <span class="w-[24px] text-center">3.7</span>
    <span class="w-[24px] text-center">5.3</span>
    <svg class="ml-[5px]" width="16" height="14" viewBox="0 0 16 14" fill="none" stroke="#cfd6dc" stroke-width="1.200"><path d="M1 12a11 11 0 0 1 11-11M4 12a8 8 0 0 1 8-8M7 12a5 5 0 0 1 5-5"/><circle cx="13" cy="12" r="1.200" fill="#cfd6dc"/></svg>
    <svg class="ml-[6px]" width="17" height="14" viewBox="0 0 17 14" fill="none" stroke="#e6e9ee" stroke-width="1.100"><path d="M1 5h3l4-3v10l-4-3H1z"/><path d="M11 4q2 3 0 6M14 2q3 5 0 10"/></svg>
    <span class="ml-[6px] w-[22px] text-[16px] text-[#eef1f4]">中</span>
    <div class="ml-[8px] w-[20px] flex flex-col items-start text-[13px] leading-[20px] overflow-hidden">
      <span class="pl-[11px]">20</span>
      <span>202</span>
    </div>
  </div>
  <!-- running-app underlines -->
  <div class="absolute left-0 bottom-0 flex gap-[9px] pl-[8px]">
    <span class="w-[40px] h-[2px] bg-[#9fc3dc]"></span><span class="w-[40px] h-[2px]"></span><span class="w-[40px] h-[2px] bg-[#9fc3dc]"></span><span class="w-[40px] h-[2px] bg-[#9fc3dc]"></span><span class="w-[40px] h-[2px] bg-[#9fc3dc]"></span><span class="w-[40px] h-[2px] bg-[#9fc3dc]"></span><span class="w-[40px] h-[2px] bg-[#9fc3dc]"></span><span class="w-[40px] h-[2px] bg-[#9fc3dc]"></span>
  </div>
</footer>

<!-- mouse cursor -->
<svg class="absolute left-[83px] top-[985px]" width="14" height="20" viewBox="0 0 14 20"><path d="M1 1v15l4-3 3 6 2-1-3-6h5z" fill="#fff" stroke="#222"/></svg>

</body>
</html>
